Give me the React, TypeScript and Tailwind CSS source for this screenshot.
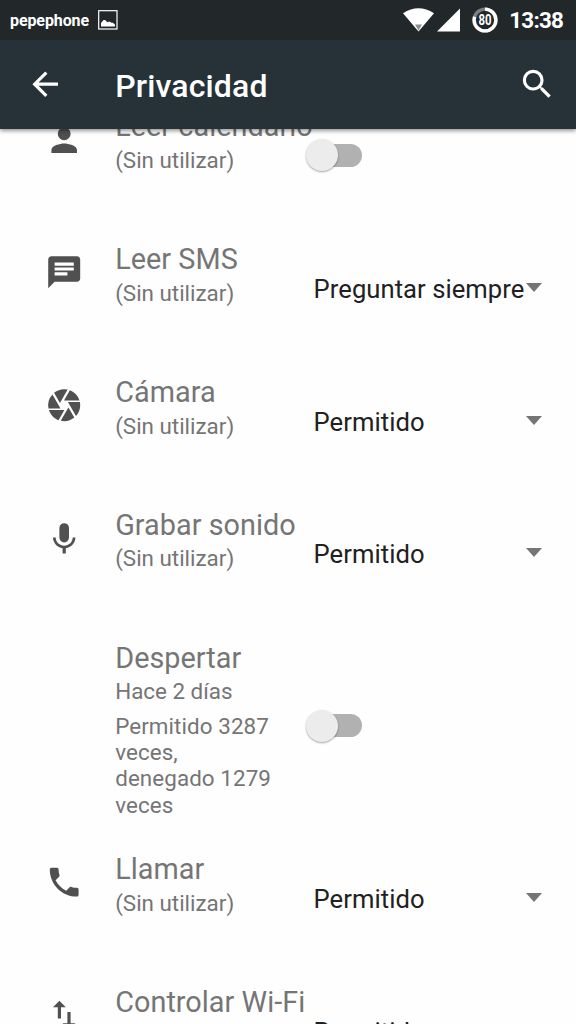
import type { ReactNode } from "react";
import {
  MdArrowBack,
  MdCamera,
  MdChat,
  MdImportExport,
  MdPerson,
  MdPhone,
  MdSearch,
} from "react-icons/md";

type Permission = {
  title: string;
  status: string;
  icon?: ReactNode;
  details?: string[];
  value?: string;
};

const MicIcon = () => (
  <svg className="mt-[0.6px] h-[38.4px] w-[38.4px]" viewBox="0 0 24 24" fill="currentColor">
    <path d="M12 14a3 3 0 0 0 3-3V5a3 3 0 0 0-6 0v6a3 3 0 0 0 3 3zm5.300-3c0 3-2.540 5.100-5.300 5.100S6.700 14 6.700 11H5c0 3.410 2.720 6.230 6 6.720V21h2v-3.280c3.280-.48 6-3.300 6-6.720h-1.700z" />
  </svg>
);

const permissions: Permission[] = [
  { title: "Leer calendario", status: "(Sin utilizar)", icon: <MdPerson /> },
  { title: "Leer SMS", status: "(Sin utilizar)", icon: <MdChat />, value: "Preguntar siempre" },
  { title: "Cámara", status: "(Sin utilizar)", icon: <MdCamera />, value: "Permitido" },
  { title: "Grabar sonido", status: "(Sin utilizar)", icon: <MicIcon />, value: "Permitido" },
  {
    title: "Despertar",
    status: "Hace 2 días",
    details: ["Permitido 3287", "veces,", "denegado 1279", "veces"],
  },
  { title: "Llamar", status: "(Sin utilizar)", icon: <MdPhone />, value: "Permitido" },
  { title: "Controlar Wi-Fi", status: "(Sin utilizar)", icon: <MdImportExport />, value: "Permitido" },
];

const StatusBar = () => (
  <div className="flex h-10 items-center bg-[#22272a] pl-[10px] pr-[13px] text-white">
    <span className="pt-[2px] text-[16px] font-bold leading-none tracking-[-0.1px]">pepephone</span>
    <svg className="ml-[9px] h-5 w-5" viewBox="0 0 20 20">
      <rect x="0.7" y="0.7" width="18.300" height="18.300" fill="none" stroke="currentColor" strokeWidth="1.200" />
      <path d="M3 16.500v-3.500l2.500-3h1.500l2.500 2.200 2-.7 2 1.200h1.500l2 2v1.800z" fill="currentColor" />
    </svg>
    <svg className="ml-auto h-6 w-[31px]" viewBox="0 0 31 24">
      <path d="M0 5.300Q15.500-4.700 31 5.300L15.500 23.500z" fill="currentColor" />
      <path d="M12 16.500h7l-3.500 6z" fill="#8b8d8f" />
    </svg>
    <svg className="ml-[3px] h-6 w-[23px]" viewBox="0 0 23 24">
      <path d="M23 0.500V23.500H0z" fill="currentColor" />
    </svg>
    <svg className="ml-[12.5px] h-[26px] w-[26px]" viewBox="0 0 26 26">
      <circle cx="13" cy="13" r="10.900" fill="none" stroke="#7b7e80" strokeWidth="3.400" />
      <circle
        cx="13"
        cy="13"
        r="10.900"
        fill="none"
        stroke="currentColor"
        strokeWidth="3.400"
        pathLength="100"
        strokeDasharray="80 20"
        transform="rotate(-90 13 13)"
      />
      <text
        x="13"
        y="18"
        textAnchor="middle"
        fontSize="14.500"
        fontWeight="700"
        fill="currentColor"
        textLength="13"
        lengthAdjust="spacingAndGlyphs"
      >
        80
      </text>
    </svg>
    <span className="ml-[11px] pt-[1px] text-[22.4px] font-bold leading-none tracking-[-0.8px]">13:38</span>
  </div>
);

const AppBar = () => (
  <header className="relative z-10 bg-[#263238] text-white shadow-[0_2px_4px_rgba(0,0,0,0.4)]">
    <StatusBar />
    <div className="flex h-[89px] items-center pl-[25.6px] pr-[19.200px]">
      <MdArrowBack className="h-[38.4px] w-[38.4px]" />
      <h1 className="ml-[51.2px] pt-[3px] text-[32px] font-medium leading-none tracking-[0.15px]">Privacidad</h1>
      <MdSearch className="ml-auto h-[38.4px] w-[38.4px]" />
    </div>
  </header>
);

const Switch = () => (
  <div className="-ml-[7.2px] flex h-8 w-14 items-center">
    <div className="z-10 h-8 w-8 shrink-0 rounded-full bg-[#ececec] shadow-[0_1px_2px_rgba(0,0,0,0.35)]" />
    <div className="-ml-[27px] h-[23px] w-[51px] rounded-full bg-[#b1b1b1]" />
  </div>
);

const Spinner = ({ value }: { value: string }) => (
  <div className="flex w-[228.4px] items-center justify-between whitespace-nowrap">
    <span className="text-[25.6px] leading-[30px] tracking-[0.05px] text-[#212121]">{value}</span>
    <svg className="mb-[3px] -ml-1 h-[9px] w-4 shrink-0 text-[#757575]" viewBox="0 0 16 9">
      <path d="M0 0h16L8 9z" fill="currentColor" />
    </svg>
  </div>
);

const PermissionRow = ({ title, status, icon, details, value }: Permission) => (
  <li className={details ? "flex h-[211.6px] shrink-0" : "flex h-[132.8px] shrink-0"}>
    <div className="w-[115.2px] shrink-0 pl-[44.8px] pt-[11.2px] text-[38.4px] text-[#505050]">{icon}</div>
    <div className="w-[198.4px] shrink-0 whitespace-nowrap text-[22.4px] leading-[26.4px] text-[#757575]">
      <h2 className="text-[28.8px] leading-[34px] tracking-[0.04px]">{title}</h2>
      <p className="mt-[3.6px]">{status}</p>
      {details && (
        <p className="mt-2 tracking-[0.08px]">
          {details.map((line) => (
            <span key={line} className="block">{line}</span>
          ))}
        </p>
      )}
    </div>
    <div className={value ? "pt-[31.7px]" : details ? "pt-[69.2px]" : "pt-[29.9px]"}>
      {value ? <Spinner value={value} /> : <Switch />}
    </div>
  </li>
);

export default function App() {
  return (
    <div className="flex h-[1024px] w-[576px] flex-col overflow-hidden bg-[#fefefe] font-['Roboto',sans-serif]">
      <AppBar />
      <main className="min-h-0 flex-1 overflow-hidden">
        <ul className="-mt-[19.6px] flex flex-col">
          {permissions.map((item) => (
            <PermissionRow key={item.title} {...item} />
          ))}
        </ul>
      </main>
    </div>
  );
}
